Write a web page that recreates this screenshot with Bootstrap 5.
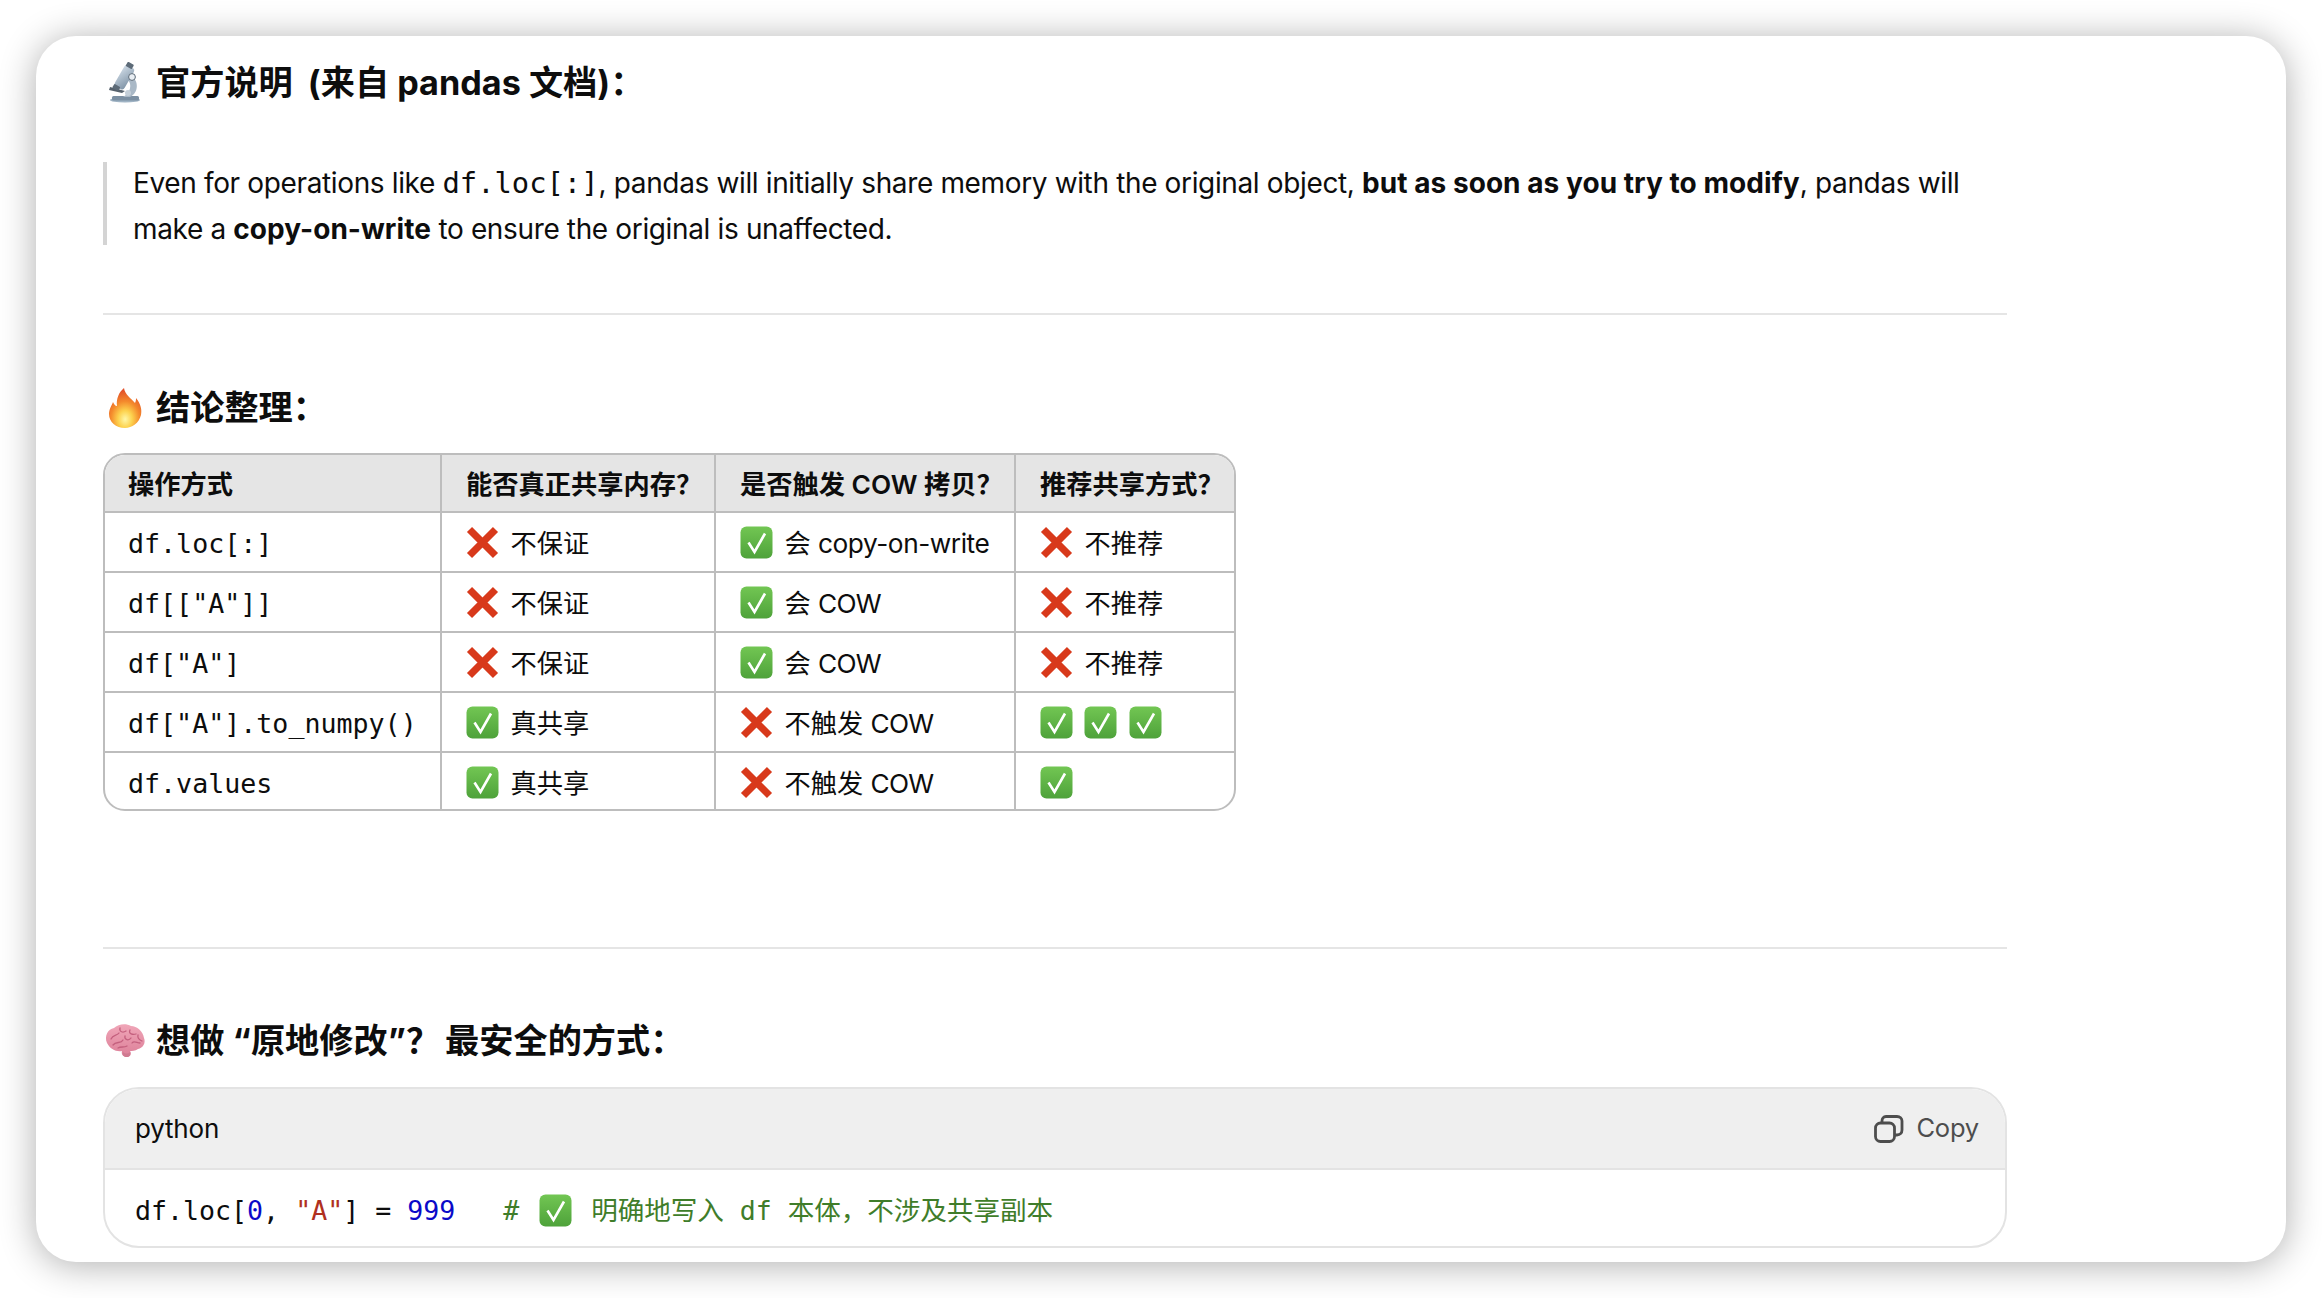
<!DOCTYPE html>
<html lang="zh">
<head>
<meta charset="utf-8">
<title>pandas copy-on-write</title>
<link rel="stylesheet" href="https://cdn.jsdelivr.net/npm/bootstrap@5.3.0/dist/css/bootstrap.min.css">
<style>
html,body{height:1298px;overflow:hidden;background:#fff}
body{font-family:"Inter","Noto Sans CJK SC",sans-serif;color:#0d0d0d}
.shot{margin:36px;height:1226px;border-radius:40px;padding:24px 279px 0 67px;background:#fff;box-shadow:0 3px 36px rgba(0,0,0,.32);overflow:hidden}
.head-line{font-size:34.2px;font-weight:700;line-height:46px;margin:0;display:flex;align-items:center;white-space:pre}
.head-line svg{flex:none;width:42px;height:42px;margin:0 10px 0 1px}
.head-two{margin-top:70px}
.head-three{margin-top:69px}
.gap-paren{margin-left:7px}
.gap-mark{margin-right:5px}
.quote-box{display:flow-root;height:83px;margin:56px 0 0;border-left:4px solid #d4d4d4;padding-left:26px;font-size:28px;line-height:46px}
.quote-box p{margin:-2px 0 0;letter-spacing:-.36px;white-space:nowrap}
.quote-box strong{letter-spacing:.05px}
.quote-box code{font-family:"DejaVu Sans Mono",monospace;font-size:28.8px;color:inherit;letter-spacing:0}
.rule-a,.rule-b{border:0;border-top:2px solid #e5e5e5;opacity:1;margin:0}
.rule-a{margin-top:68px}
.rule-b{margin-top:136px}
.grid-wrap{width:1133px;height:358px;margin-top:22px;border:2px solid #bdbdbd;border-radius:22px;overflow:hidden}
.cow-table{table-layout:fixed;width:1131px;margin:0;font-size:26.25px;border-collapse:separate;border-spacing:0;color:#0d0d0d}
.cow-table th,.cow-table td{height:60px;padding:3px 0 0 24px;vertical-align:middle;border:0;border-right:2px solid #bdbdbd;border-bottom:2px solid #bdbdbd;white-space:nowrap;background:transparent;box-shadow:none}
.cow-table th{height:58px;background:#e5e5e5;font-weight:600}
.cow-table tr>*:first-child{padding-left:23px}
.cow-table tr>*:last-child{border-right:0}
.cow-table tbody tr:last-child td{border-bottom:0;height:56px;padding-top:5px}
.cow-table td code{font-family:"DejaVu Sans Mono",monospace;font-size:26.65px;color:#0d0d0d}
.w-a{width:337px}.w-b{width:274px}.w-c{width:300px}.w-d{width:220px}
.glyph{display:inline-block;width:33px;height:33px;margin-right:4px;vertical-align:-6px}
.lat-a{letter-spacing:-.45px}
.lat-b{letter-spacing:-.8px}
.code-card{height:161px;margin-top:23px;border:2px solid #e3e3e3;border-radius:36px;overflow:hidden}
.code-top{height:79px;background:#efefef;border-bottom:2px solid #e3e3e3;padding:0 26px 0 30px;font-size:26px;box-sizing:content-box}
.lang-txt{letter-spacing:-.2px}
.copy-txt{color:#4d4d4d;font-size:25.5px;letter-spacing:-.2px}
.copy-ico{width:30px;height:28px;margin-right:12px}
.code-line{font-family:"DejaVu Sans Mono","Noto Sans CJK SC",monospace;font-size:26.6px;line-height:78px;padding:2px 0 0 30px;white-space:pre;color:#0d0d0d;margin:0}
.code-line .glyph{margin:0 3px 0 4px;vertical-align:-7px}
.c-num{color:#0a0ac8}.c-str{color:#b03020}.c-com{color:#3f7d2a;letter-spacing:-.06px}
</style>
</head>
<body>
<svg width="0" height="0" class="position-absolute">
  <defs>
    <linearGradient id="gGreen" x1="0" y1="0" x2="0" y2="1"><stop offset="0" stop-color="#72c653"/><stop offset="1" stop-color="#4ea23a"/></linearGradient>
    <radialGradient id="gFlame" cx=".5" cy=".78" r=".72"><stop offset="0" stop-color="#fff7a8"/><stop offset=".3" stop-color="#fdd24e"/><stop offset=".62" stop-color="#f48a2c"/><stop offset="1" stop-color="#e2502a"/></radialGradient>
    <linearGradient id="gBrain" x1="0" y1="0" x2="0" y2="1"><stop offset="0" stop-color="#f0a6b8"/><stop offset="1" stop-color="#dc7f98"/></linearGradient>
    <linearGradient id="gTube" x1="0" y1="0" x2="1" y2="1"><stop offset="0" stop-color="#cfdbe6"/><stop offset="1" stop-color="#7f93a6"/></linearGradient>
    <symbol id="i-ok" viewBox="0 0 33 33"><rect x=".5" y=".5" width="32" height="32" rx="6" fill="url(#gGreen)"/><path d="M8.5 16.5 14.5 26 25 7.5" fill="none" stroke="#fff" stroke-width="2.6" stroke-linejoin="miter"/></symbol>
    <symbol id="i-no" viewBox="0 0 33 33"><path d="M3.5 3.5 29.5 29.5M29.5 3.5 3.5 29.5" fill="none" stroke="#d8391b" stroke-width="7.2"/></symbol>
    <symbol id="i-mic" viewBox="0 0 42 42"><ellipse cx="21" cy="38" rx="15" ry="2.5" fill="#9fb3c4"/><rect x="8" y="34" width="27" height="4.5" rx="1.5" fill="#7b8fa2"/><path d="M27 14C35 18 35 31 26 35L19 35C27 31 28 22 24 18Z" fill="#a9b8c6"/><path d="M6 25 21 29 18 31 5 28Z" fill="#56616c"/><rect x="15" y="3" width="11" height="24" rx="3" transform="rotate(30 20 15)" fill="url(#gTube)"/><rect x="22.5" y="1" width="7" height="5" rx="1" transform="rotate(30 26 3)" fill="#5d6b78"/><rect x="9" y="23" width="7" height="4.5" rx="1" transform="rotate(30 12 25)" fill="#5d6b78"/><circle cx="28" cy="15" r="3.4" fill="#e9eef3" stroke="#5d6b78"/><circle cx="24" cy="31" r="3" fill="#c4cfd9"/></symbol>
    <symbol id="i-fire" viewBox="0 0 42 42"><path d="M20 1C21 8 27 11 31 16 32 14 32 12 32 11 37 17 38 23 37 28 35 36 28 41 21 41 12 41 5 35 5 27 5 22 8 18 9 15 10 17 11 19 13 19 12 12 15 5 20 1Z" fill="url(#gFlame)"/></symbol>
    <symbol id="i-brain" viewBox="0 0 42 36"><path d="M3 20C0 13 4 6 10 5 14 1 22 0 27 3 33 3 39 8 40 15 42 20 39 25 34 26 31 28 28 28 26 28 28 31 26 34 23 34 19 34 17 31 18 28 12 29 6 26 3 20Z" fill="url(#gBrain)"/><path d="M7 16C9 11 13 13 15 10M16 5C15 9 19 10 22 8M26 7C24 11 29 12 32 11M34 12C33 16 36 17 38 18M9 22C12 18 17 21 19 17M21 13C20 17 25 18 27 15M28 20C30 17 33 20 36 20M14 25C17 23 20 25 23 23" fill="none" stroke="#c4607e" stroke-width="1.3" stroke-linecap="round"/><path d="M19 29C21 31 24 31 26 29 27 32 25 34 23 34 20 34 18 32 19 29Z" fill="#cf7a90"/></symbol>
  </defs>
</svg>

<main class="shot">
  <h2 class="head-line"><svg viewBox="0 0 42 42" aria-hidden="true"><use href="#i-mic"/></svg>官方说明 <span class="gap-paren">(</span>来自 pandas 文档)：</h2>

  <blockquote class="quote-box">
    <p>Even for operations like <code>df.loc[:]</code>, pandas will initially share memory with the original object, <strong>but as soon as you try to modify</strong>, pandas will<br>make a <strong>copy-on-write</strong> to ensure the original is unaffected.</p>
  </blockquote>

  <hr class="rule-a">

  <h2 class="head-line head-two"><svg viewBox="0 0 42 42" aria-hidden="true"><use href="#i-fire"/></svg>结论整理：</h2>

  <div class="grid-wrap">
    <table class="table cow-table">
      <colgroup><col class="w-a"><col class="w-b"><col class="w-c"><col class="w-d"></colgroup>
      <thead>
        <tr><th>操作方式</th><th>能否真正共享内存？</th><th>是否触发 COW 拷贝？</th><th>推荐共享方式？</th></tr>
      </thead>
      <tbody>
        <tr><td><code>df.loc[:]</code></td><td><svg class="glyph"><use href="#i-no"/></svg> 不保证</td><td><svg class="glyph"><use href="#i-ok"/></svg> 会 <span class="lat-a">copy-on-write</span></td><td><svg class="glyph"><use href="#i-no"/></svg> 不推荐</td></tr>
        <tr><td><code>df[["A"]]</code></td><td><svg class="glyph"><use href="#i-no"/></svg> 不保证</td><td><svg class="glyph"><use href="#i-ok"/></svg> 会 <span class="lat-b">COW</span></td><td><svg class="glyph"><use href="#i-no"/></svg> 不推荐</td></tr>
        <tr><td><code>df["A"]</code></td><td><svg class="glyph"><use href="#i-no"/></svg> 不保证</td><td><svg class="glyph"><use href="#i-ok"/></svg> 会 <span class="lat-b">COW</span></td><td><svg class="glyph"><use href="#i-no"/></svg> 不推荐</td></tr>
        <tr><td><code>df["A"].to_numpy()</code></td><td><svg class="glyph"><use href="#i-ok"/></svg> 真共享</td><td><svg class="glyph"><use href="#i-no"/></svg> 不触发 <span class="lat-b">COW</span></td><td><svg class="glyph"><use href="#i-ok"/></svg> <svg class="glyph"><use href="#i-ok"/></svg> <svg class="glyph"><use href="#i-ok"/></svg></td></tr>
        <tr><td><code>df.values</code></td><td><svg class="glyph"><use href="#i-ok"/></svg> 真共享</td><td><svg class="glyph"><use href="#i-no"/></svg> 不触发 <span class="lat-b">COW</span></td><td><svg class="glyph"><use href="#i-ok"/></svg></td></tr>
      </tbody>
    </table>
  </div>

  <hr class="rule-b">

  <h2 class="head-line head-three"><svg viewBox="0 0 42 36" aria-hidden="true"><use href="#i-brain"/></svg>想做 “原地修改”<span class="gap-mark">？</span>最安全的方式：</h2>

  <div class="code-card">
    <div class="code-top d-flex align-items-center justify-content-between">
      <span class="lang-txt">python</span>
      <span class="d-flex align-items-center copy-txt">
        <svg class="copy-ico" viewBox="0 0 30 28" fill="none" stroke="#4d4d4d" stroke-width="2.8" aria-hidden="true"><rect x="1.5" y="8" width="19" height="18.5" rx="5"/><path d="M8 8V6C8 3.5 9.5 1.5 12 1.5H23C26 1.5 28 3.5 28 6V15C28 18 26 20 23 20H20.5"/></svg>Copy
      </span>
    </div>
    <pre class="code-line">df.loc[<span class="c-num">0</span>, <span class="c-str">"A"</span>] = <span class="c-num">999</span>   <span class="c-com"># <svg class="glyph"><use href="#i-ok"/></svg> 明确地写入 df 本体，不涉及共享副本</span></pre>
  </div>
</main>
<script src="https://cdn.jsdelivr.net/npm/bootstrap@5.3.0/dist/js/bootstrap.bundle.min.js"></script>
</body>
</html>
